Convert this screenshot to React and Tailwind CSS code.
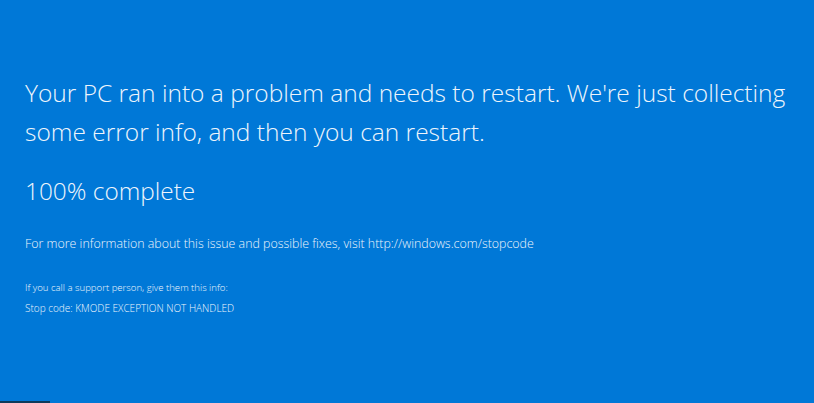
export default function App() {
  return (
    <div
      className="flex h-[403px] w-[814px] flex-col overflow-hidden bg-[#0078d7] text-[#eef5fc]"
      style={{ fontFamily: '"Open Sans", "Noto Sans", sans-serif' }}
    >
      <div className="pl-[25px] pt-[73px]">
        <p className="text-[24.5px] font-light leading-[39px]">
          Your PC ran into a problem and needs to restart. We're just collecting
          <br />
          some error info, and then you can restart.
        </p>
        <p className="mt-[24px] text-[24.4px] font-light leading-[32px]">100% complete</p>
        <p className="mt-[29px] text-[12.4px] font-light leading-[16px]">
          For more information about this issue and possible fixes, visit http://windows.com/stopcode
        </p>
        <p className="mt-[29px] text-[9.6px] font-light leading-[13px]">
          If you call a support person, give them this info:
        </p>
        <p className="mt-[8px] text-[10px] font-light leading-[13px]">Stop code: KMODE EXCEPTION NOT HANDLED</p>
      </div>
      <div className="mt-auto h-[2px] w-[50px] bg-[#0d3a5c]" />
    </div>
  );
}
